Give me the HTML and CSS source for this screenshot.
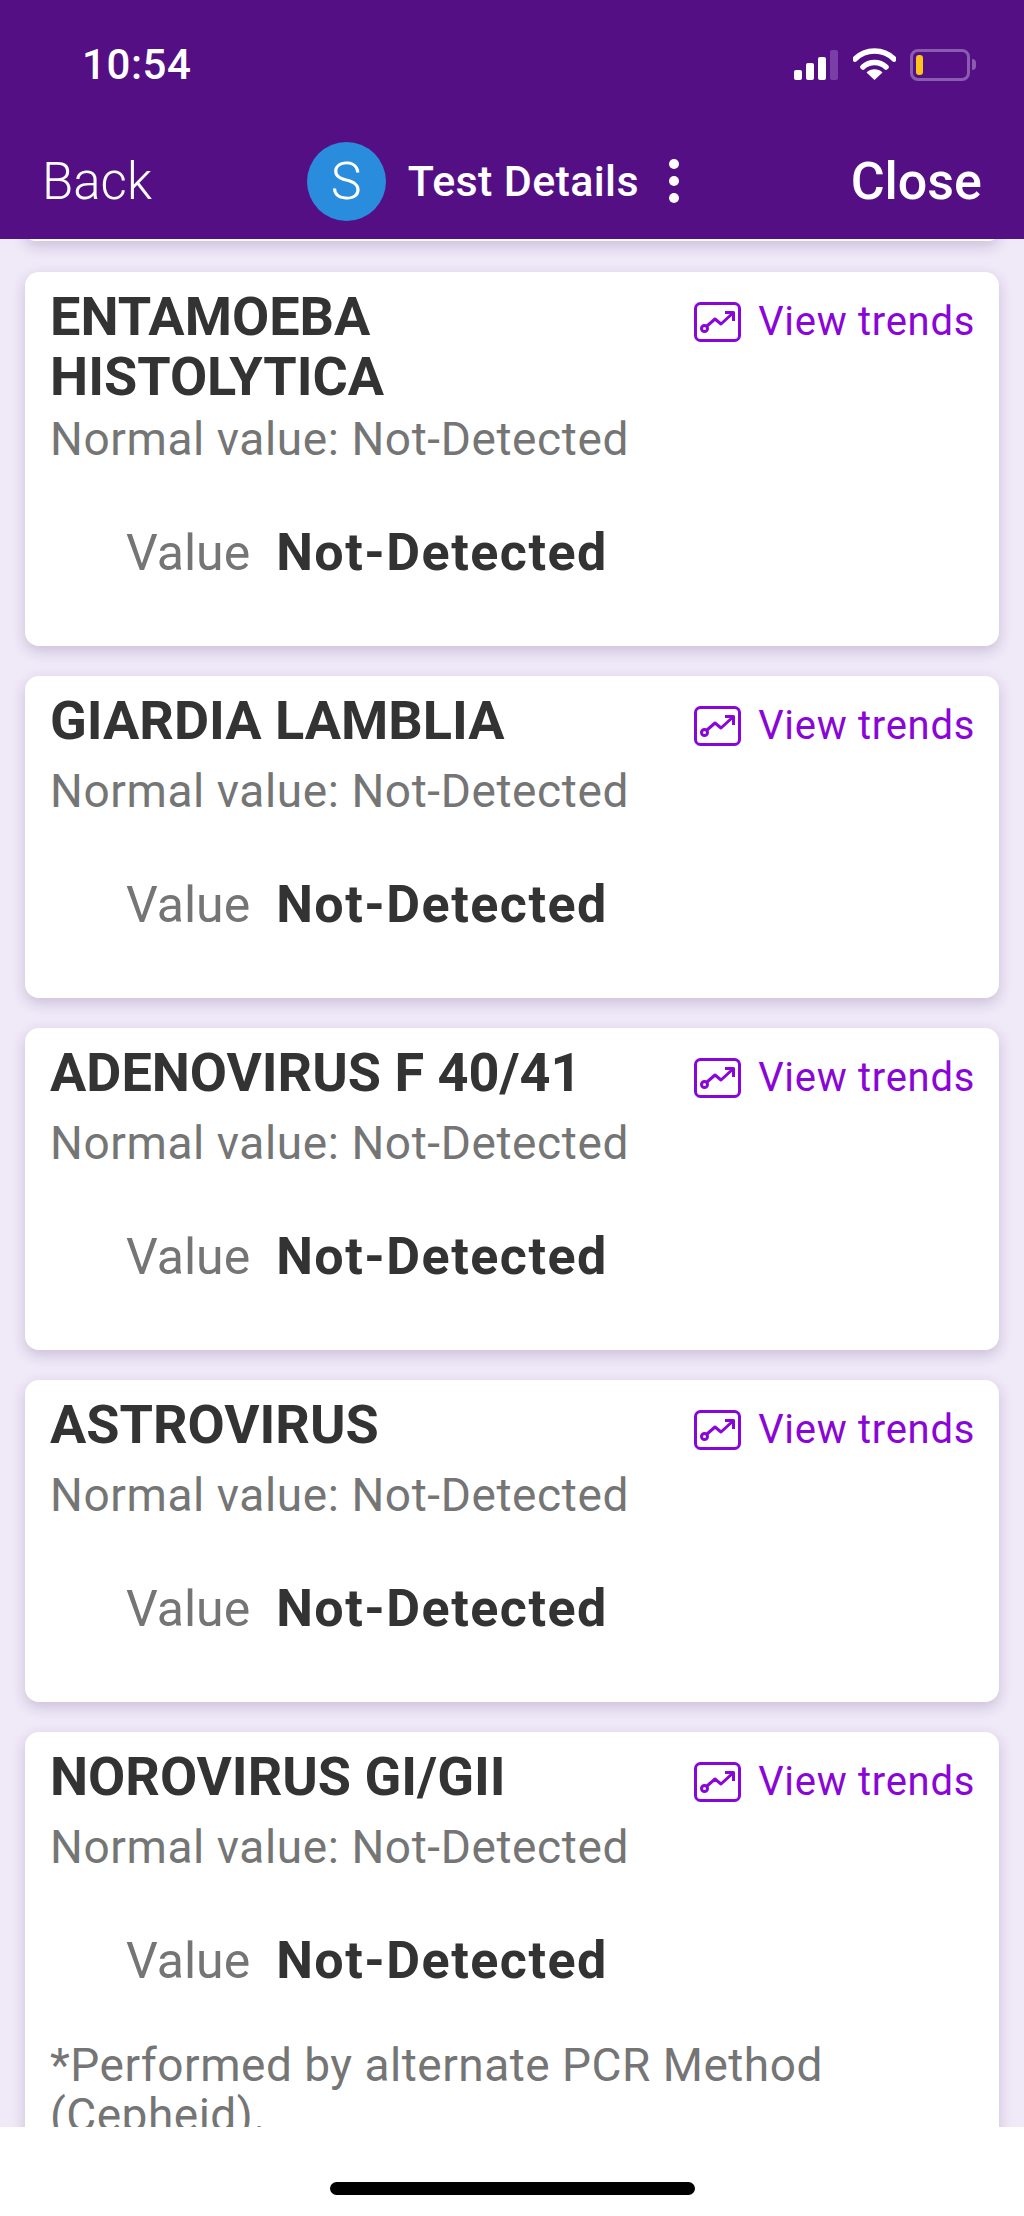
FILE: index.html
```html
<!DOCTYPE html>
<html lang="en">
<head>
  <meta charset="UTF-8" />
  <title>Test Details</title>
  <meta name="viewport" content="width=device-width, initial-scale=1.0" />
  <link rel="stylesheet" href="styles.css">
</head>
<body>
  <div class="phone">
    <header class="topbar">
      <div class="status">
        <span class="time">10:54</span>
        <div class="status-icons">
          <svg class="ic-signal" width="44" height="30" viewBox="0 0 44 30">
            <rect x="0" y="20" width="8" height="10" rx="2" fill="#fff"/>
            <rect x="12" y="13" width="8" height="17" rx="2" fill="#fff"/>
            <rect x="24" y="7" width="8" height="23" rx="2" fill="#fff"/>
            <rect x="36" y="0" width="8" height="30" rx="2" fill="#7a3fa6"/>
          </svg>
          <svg class="ic-wifi" width="43" height="32" viewBox="0 0 43 32">
            <path d="M2 11 A28 28 0 0 1 41 11" fill="none" stroke="#fff" stroke-width="5.5" stroke-linecap="round"/>
            <path d="M10 19 A17 17 0 0 1 33 19" fill="none" stroke="#fff" stroke-width="5.5" stroke-linecap="round"/>
            <path d="M21.5 32 L13.5 24.5 A11.5 11.5 0 0 1 29.5 24.5 Z" fill="#fff"/>
          </svg>
          <div class="battery"><span class="battery-level"></span></div>
          <span class="battery-tip"></span>
        </div>
      </div>
      <nav class="navrow">
        <a class="nav-back">Back</a>
        <div class="nav-mid">
          <span class="avatar">S</span>
          <span class="nav-title">Test Details</span>
          <span class="dots"><i></i><i></i><i></i></span>
        </div>
        <a class="nav-close">Close</a>
      </nav>
    </header>

    <main class="list">
      <div class="card-tail"></div>

      <section class="card">
        <div class="card-head">
          <h3>ENTAMOEBA<br>HISTOLYTICA</h3>
          <a class="trends">
            <svg width="47" height="40" viewBox="0 0 47 40" fill="none" stroke="#8a05d8" stroke-width="3">
              <rect x="1.5" y="1.5" width="44" height="37" rx="5"/>
              <circle cx="10.5" cy="26.5" r="3"/>
              <path d="M13 24 L21 17 L27 22 L39 11 M31 10.5 H39.5 V19" stroke-linejoin="round"/>
            </svg>
            <span>View trends</span>
          </a>
        </div>
        <p class="normal">Normal value: Not-Detected</p>
        <div class="value-row"><span class="value-label">Value</span><b>Not-Detected</b></div>
      </section>

      <section class="card">
        <div class="card-head">
          <h3>GIARDIA LAMBLIA</h3>
          <a class="trends">
            <svg width="47" height="40" viewBox="0 0 47 40" fill="none" stroke="#8a05d8" stroke-width="3">
              <rect x="1.5" y="1.5" width="44" height="37" rx="5"/>
              <circle cx="10.5" cy="26.5" r="3"/>
              <path d="M13 24 L21 17 L27 22 L39 11 M31 10.5 H39.5 V19" stroke-linejoin="round"/>
            </svg>
            <span>View trends</span>
          </a>
        </div>
        <p class="normal">Normal value: Not-Detected</p>
        <div class="value-row"><span class="value-label">Value</span><b>Not-Detected</b></div>
      </section>

      <section class="card">
        <div class="card-head">
          <h3>ADENOVIRUS F 40/41</h3>
          <a class="trends">
            <svg width="47" height="40" viewBox="0 0 47 40" fill="none" stroke="#8a05d8" stroke-width="3">
              <rect x="1.5" y="1.5" width="44" height="37" rx="5"/>
              <circle cx="10.5" cy="26.5" r="3"/>
              <path d="M13 24 L21 17 L27 22 L39 11 M31 10.5 H39.5 V19" stroke-linejoin="round"/>
            </svg>
            <span>View trends</span>
          </a>
        </div>
        <p class="normal">Normal value: Not-Detected</p>
        <div class="value-row"><span class="value-label">Value</span><b>Not-Detected</b></div>
      </section>

      <section class="card">
        <div class="card-head">
          <h3>ASTROVIRUS</h3>
          <a class="trends">
            <svg width="47" height="40" viewBox="0 0 47 40" fill="none" stroke="#8a05d8" stroke-width="3">
              <rect x="1.5" y="1.5" width="44" height="37" rx="5"/>
              <circle cx="10.5" cy="26.5" r="3"/>
              <path d="M13 24 L21 17 L27 22 L39 11 M31 10.5 H39.5 V19" stroke-linejoin="round"/>
            </svg>
            <span>View trends</span>
          </a>
        </div>
        <p class="normal">Normal value: Not-Detected</p>
        <div class="value-row"><span class="value-label">Value</span><b>Not-Detected</b></div>
      </section>

      <section class="card">
        <div class="card-head">
          <h3>NOROVIRUS GI/GII</h3>
          <a class="trends">
            <svg width="47" height="40" viewBox="0 0 47 40" fill="none" stroke="#8a05d8" stroke-width="3">
              <rect x="1.5" y="1.5" width="44" height="37" rx="5"/>
              <circle cx="10.5" cy="26.5" r="3"/>
              <path d="M13 24 L21 17 L27 22 L39 11 M31 10.5 H39.5 V19" stroke-linejoin="round"/>
            </svg>
            <span>View trends</span>
          </a>
        </div>
        <p class="normal">Normal value: Not-Detected</p>
        <div class="value-row"><span class="value-label">Value</span><b>Not-Detected</b></div>
        <p class="footnote">*Performed by alternate PCR Method (Cepheid).</p>
      </section>
    </main>

    <footer class="home"><span class="home-bar"></span></footer>
  </div>
</body>
</html>
```

FILE: styles.css
```css
* { box-sizing: border-box; }
html, body { margin: 0; padding: 0; }
body { font-family: Roboto, "Liberation Sans", sans-serif; background: #fff; }
.phone { width: 1024px; height: 2216px; display: flex; flex-direction: column; overflow: hidden; }

/* top bar */
.topbar { height: 239px; flex: none; background: #540f85; color: #fff; position: relative; z-index: 2; }
.status { height: 132px; display: flex; justify-content: space-between; padding: 48px 48px 0 82px; }
.time { font-size: 42px; font-weight: 500; line-height: 34px; letter-spacing: .6px; }
.status-icons { display: flex; align-items: flex-start; }
.ic-signal { margin: 2px 15px 0 0; }
.ic-wifi { margin: 0 14px 0 0; }
.battery { width: 60px; height: 32px; border: 3px solid #8a5cb0; border-radius: 8px; padding: 3px; margin-top: 1px; }
.battery-level { display: block; width: 7px; height: 20px; background: #fcc419; border-radius: 3px; }
.battery-tip { width: 4px; height: 11px; margin: 11px 0 0 2px; background: #8a5cb0; border-radius: 0 4px 4px 0; }
.navrow { display: flex; align-items: center; justify-content: space-between; padding: 0 42px 0 42px; height: 98px; }
.nav-back { font-size: 51px; font-weight: 300; }
.nav-close { font-size: 52px; font-weight: 500; }
.nav-mid { display: flex; align-items: center; margin-right: 17px; }
.avatar { width: 79px; height: 79px; border-radius: 50%; background: #2a8cdc; display: flex; align-items: center; justify-content: center; font-size: 52px; font-weight: 300; margin-right: 22px; }
.nav-title { font-size: 43px; font-weight: 500; letter-spacing: .35px; }
.dots { display: flex; flex-direction: column; gap: 7px; margin-left: 30px; }
.dots i { width: 10px; height: 10px; border-radius: 50%; background: #fff; }

/* list */
.list { flex: 1; min-height: 0; overflow: hidden; background: #f0e9f8; padding: 0 25px; }
.card-tail { height: 20px; margin-top: -18px; margin-bottom: 31px; background: #fff; border-radius: 14px; box-shadow: 0 5px 14px rgba(70, 40, 110, .22); }
.card { background: #fff; border-radius: 14px; box-shadow: 0 5px 14px rgba(70, 40, 110, .22); padding: 15px 24px 63px 25px; margin-bottom: 30px; }
.card-head { display: flex; justify-content: space-between; align-items: flex-start; min-height: 68px; }
h3 { margin: 0; font-size: 54px; line-height: 60px; font-weight: 700; color: #333; }
.trends { display: flex; align-items: flex-start; gap: 17px; color: #8a05d8; font-size: 40px; letter-spacing: .7px; line-height: 40px; margin-top: 15px; }
.normal { margin: 2px 0 0; font-size: 46px; line-height: 60px; letter-spacing: .6px; color: #757575; }
.value-row { display: flex; align-items: baseline; padding-left: 76px; margin-top: 54px; line-height: 60px; }
.value-label { font-size: 50px; color: #757575; margin-right: 26px; }
.value-row b { font-size: 52px; color: #333; font-weight: 700; letter-spacing: 1.5px; }
.footnote { margin: 49px 0 0; font-size: 46px; line-height: 50px; letter-spacing: .5px; color: #757575; }

/* home indicator */
.home { height: 89px; flex: none; background: #fff; display: flex; justify-content: center; padding-top: 55px; position: relative; z-index: 2; }
.home-bar { width: 365px; height: 13px; background: #000; border-radius: 7px; }
```
